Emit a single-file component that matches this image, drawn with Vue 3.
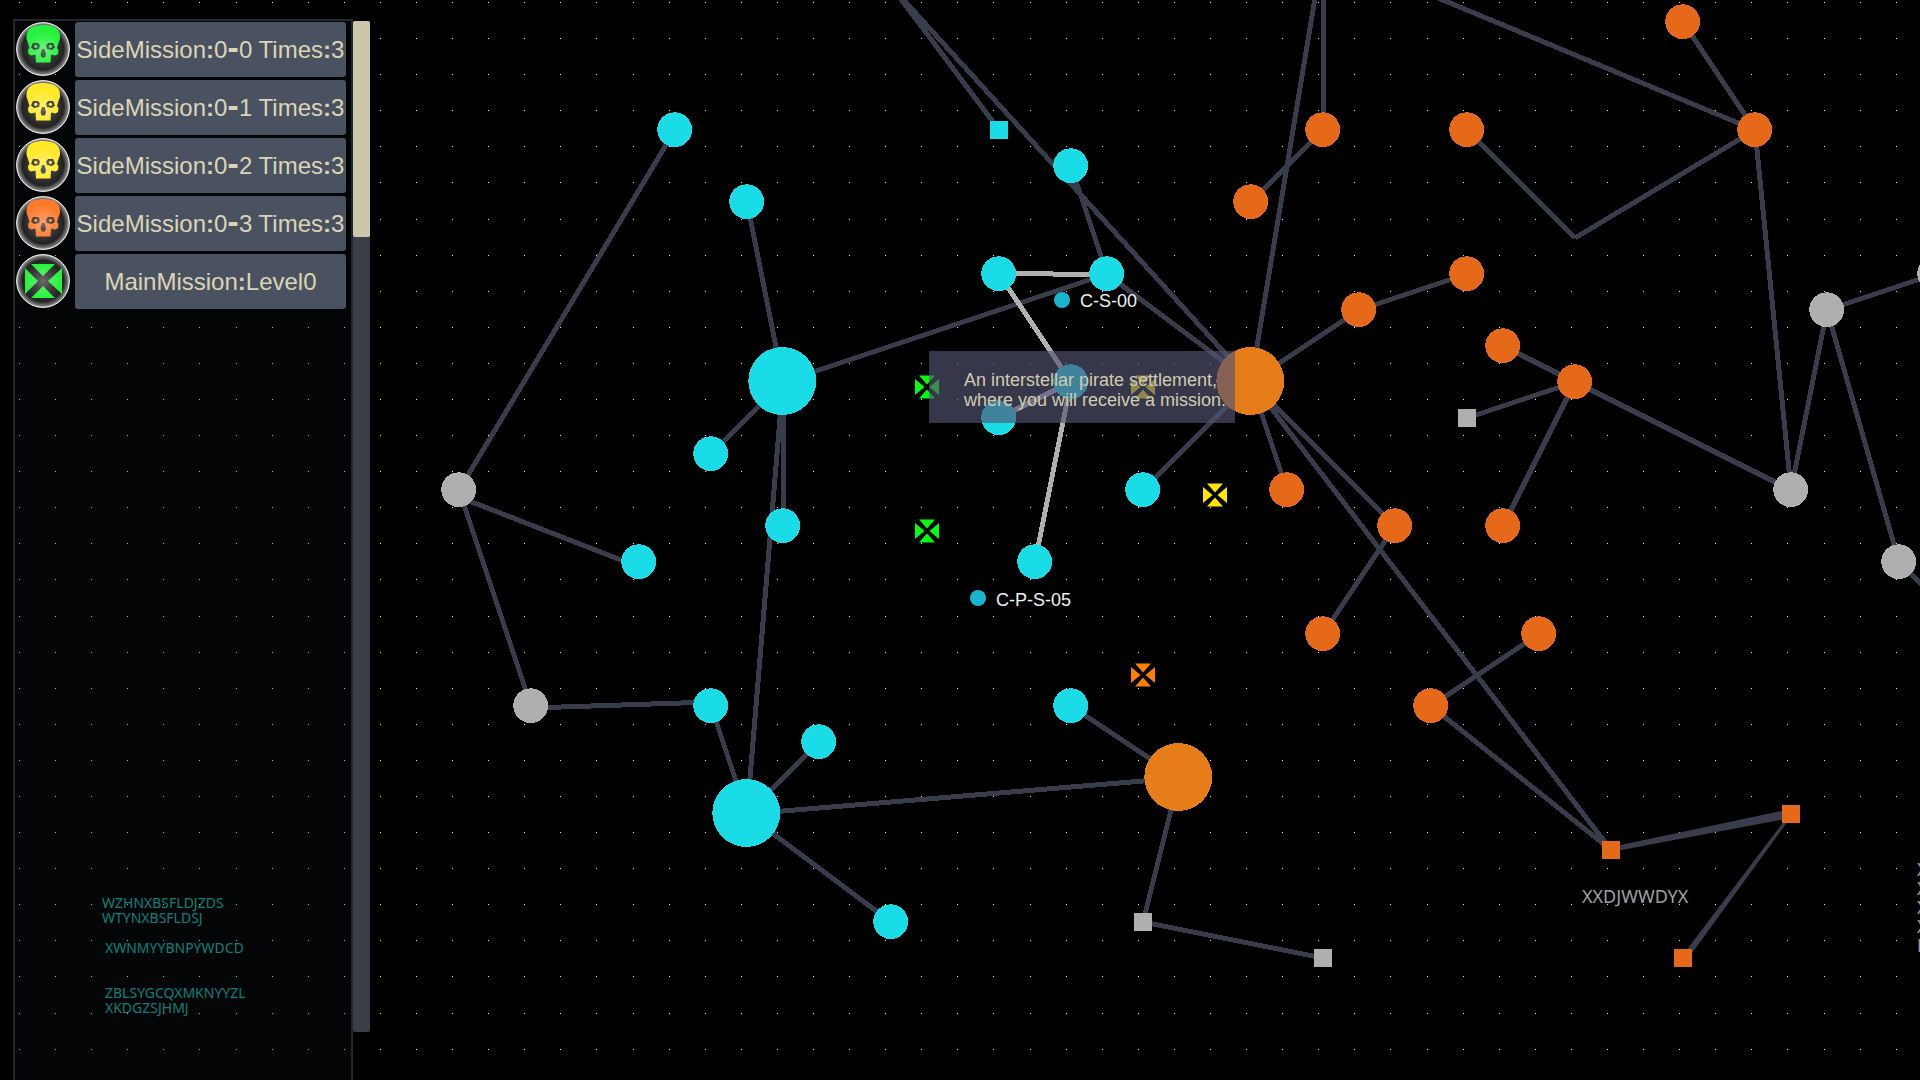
<script setup>
  const CELL = 36;

  // Dots of the star field, a little wider apart than the node grid
  const dots = [];
  for (let row = 0; row < 60; row++)
  {
    for (let col = 0; col < 108; col++)
      dots.push("M" + Math.round(19 + col * 36.09) + " " + Math.round(2 + row * 36.09) + "h1v1h-1z");
  }
  const dotPath = dots.join("");

  const missions = [
    { id: 0, label: "SideMission:0-0 Times:3", icon: "skull", color: "#24f23c" },
    { id: 1, label: "SideMission:0-1 Times:3", icon: "skull", color: "#ffe927" },
    { id: 2, label: "SideMission:0-2 Times:3", icon: "skull", color: "#ffe927" },
    { id: 3, label: "SideMission:0-3 Times:3", icon: "skull", color: "#ff7a2c" },
    { id: 4, label: "MainMission:Level0", icon: "cross", color: "#24f23c" }
  ];

  // [column, row] on the grid
  const circles = [
    { type: "cyan", cells: [[18, 3], [20, 5], [27, 7], [30, 7], [29, 4], [29, 10], [27, 11], [19, 12], [21, 14], [17, 15], [28, 15], [31, 13], [19, 19], [22, 20], [24, 25], [29, 19]] },
    { type: "orange", cells: [[46, 0], [48, 3], [40, 3], [36, 3], [34, 5], [40, 7], [37, 8], [41, 9], [43, 10], [35, 13], [38, 14], [41, 14], [36, 17], [42, 17], [39, 19]] },
    { type: "gray", cells: [[12, 13], [14, 19], [50, 8], [49, 13], [52, 15], [53, 7]] }
  ];

  const hubs = [
    { type: "cyan", cell: [21, 10] },
    { type: "cyan", cell: [20, 22] },
    { type: "amber", cell: [34, 10] },
    { type: "amber", cell: [32, 21] }
  ];

  const squares = [
    { type: "cyan", cell: [27, 3] },
    { type: "gray", cell: [40, 11] },
    { type: "gray", cell: [31, 25] },
    { type: "gray", cell: [36, 26] },
    { type: "orange", cell: [49, 22] },
    { type: "orange", cell: [44, 23] },
    { type: "orange", cell: [46, 26] }
  ];

  // [column, row, column, row]
  const routes = [
    [18, 3, 12, 13], [12, 13, 14, 19], [19, 19, 20, 22],
    [20, 22, 22, 20], [20, 22, 24, 25], [20, 22, 32, 21], [20, 22, 21, 10],
    [21, 10, 21, 14], [21, 10, 19, 12], [21, 10, 20, 5], [21, 10, 30, 7],
    [30, 7, 29, 4], [30, 7, 34, 10], [24, -1, 34, 10], [24, -1, 27, 3],
    [34, 10, 36, -2], [36, 3, 36, -2], [36, 3, 34, 5], [36, -2, 48, 3],
    [34, 10, 31, 13], [34, 10, 35, 13], [34, 10, 38, 14], [34, 10, 44, 23], [34, 10, 37, 8],
    [37, 8, 40, 7], [38, 14, 36, 17], [42, 17, 39, 19], [39, 19, 44, 23],
    [29, 19, 32, 21], [32, 21, 31, 25], [31, 25, 36, 26],
    [40, 3, 43, 6], [43, 6, 48, 3], [48, 3, 46, 0], [48, 3, 49, 13],
    [49, 13, 50, 8], [49, 13, 43, 10], [50, 8, 53, 7], [50, 8, 52, 15], [52, 15, 54, 17],
    [43, 10, 41, 9], [43, 10, 40, 11], [43, 10, 41, 14]
  ];

  const activeRoutes = [[27, 7, 29, 10], [29, 10, 27, 11], [29, 10, 28, 15]];

  const markers = [
    { x: 927, y: 387, color: "#00ff0a" },
    { x: 927, y: 531, color: "#00ff0a" },
    { x: 1143, y: 387, color: "#ffe600" },
    { x: 1215, y: 495, color: "#ffe600" },
    { x: 1143, y: 675, color: "#ff8000" }
  ];

  const edgeLetters = ["X", "X", "X", "X", "N"];

  const px = (col) => 27 + col * CELL;
  const py = (row) => 22 + row * CELL;

  // The font's own colon and dash are too light, so they are drawn bold
  const split = (label) => label.split(/([:-])/);
</script>

<template>
  <main>
    <svg class="map" role="img" aria-label="Star map">
      <path class="dots" :d="dotPath" />
      <g class="routes">
        <line v-for="(r, i) in routes" :key="i" :x1="px(r[0])" :y1="py(r[1])" :x2="px(r[2])" :y2="py(r[3])" />
        <line x1="459" y1="497" x2="639" y2="567" />
        <line x1="531" y1="708" x2="711" y2="702" />
        <polygon points="1611,847 1791,809 1791,818 1611,852" />
        <polygon points="1791,812 1793,814 1687,960 1682,956" />
      </g>
      <g class="routes active">
        <line x1="999" y1="273" x2="1107" y2="275" />
        <line v-for="(r, i) in activeRoutes" :key="i" :x1="px(r[0])" :y1="py(r[1])" :x2="px(r[2])" :y2="py(r[3])" />
      </g>
      <g v-for="group in circles" :key="group.type" :class="group.type">
        <circle v-for="c in group.cells" :key="c.join()" :cx="px(c[0]) - 0.3" :cy="py(c[1]) - 0.3" r="17.4" />
      </g>
      <circle v-for="h in hubs" :key="h.cell.join()" :class="h.type" :cx="px(h.cell[0]) - 0.7" :cy="py(h.cell[1]) - 1" r="34" />
      <rect v-for="s in squares" :key="s.cell.join()" :class="s.type" :x="px(s.cell[0]) - 9" :y="py(s.cell[1]) - 9" width="18" height="18" />
      <g v-for="m in markers" :key="m.x + '-' + m.y" :fill="m.color" :transform="`translate(${m.x} ${m.y})`">
        <path d="M-8 -11.5H8L0 -2.5ZM-8 11.5H8L0 2.5ZM-12 -8V8L-2.5 0ZM12 -8V8L2.5 0Z" />
      </g>
      <circle class="place" cx="1062" cy="300" r="8" />
      <text class="place-name" x="1080" y="307">C-S-00</text>
      <circle class="place" cx="978" cy="598" r="8" />
      <text class="place-name" x="996" y="606">C-P-S-05</text>
      <text class="region" x="1582" y="903">XXDJWWDYX</text>
      <text v-for="(letter, i) in edgeLetters" :key="i" class="region" x="1917" :y="876 + i * 19">{{ letter }}</text>
    </svg>

    <aside>
      <div class="panel">
        <ul>
          <li v-for="mission in missions" :key="mission.id">
            <svg class="badge" viewBox="0 0 54 54" aria-hidden="true">
              <defs>
                <radialGradient :id="'ball' + mission.id">
                  <stop offset="0" stop-color="#6a6a6a" />
                  <stop offset="0.45" stop-color="#3c3c3c" />
                  <stop offset="0.78" stop-color="#222" />
                  <stop offset="0.92" stop-color="#6c6c6c" />
                  <stop offset="1" stop-color="#b0b0b0" />
                </radialGradient>
                <radialGradient :id="'shine' + mission.id" cx="27" cy="27" r="18" gradientUnits="userSpaceOnUse">
                  <stop offset="0" stop-color="#fff" stop-opacity="0.3" />
                  <stop offset="1" stop-color="#fff" stop-opacity="0" />
                </radialGradient>
              </defs>
              <circle cx="27" cy="27" r="26.4" :fill="`url(#ball${mission.id})`" stroke="#f4f4f4" />
              <g v-if="mission.icon === 'skull'">
                <g v-for="fill in [mission.color, `url(#shine${mission.id})`]" :key="fill" :fill="fill">
                  <path fill-rule="evenodd" d="M27 3C20 3 14 5 12 9C10.500 11 10.500 14 10.500 17L12 21L13.500 26L12 28L12.500 32L15 33.500L19.500 32.500L20 40.500H34.500L35 32.500L39.500 33.500L42 32L42.500 28L41 26L42.500 21L44 17C44 14 44 11 42.500 9C40.500 5 34 3 27 3ZM17 21H22L24 23.500L23 27L18 28L15 25.500ZM37 21H32L30 23.500L31 27L36 28L39 25.500ZM26 27H28.500L30 32L29 35.500H25.500L24.500 32Z" />
                  <circle cx="19.700" cy="24.300" r="1.600" />
                  <circle cx="34.500" cy="24.300" r="1.600" />
                </g>
              </g>
              <g v-else>
                <path v-for="fill in [mission.color, `url(#shine${mission.id})`]" :key="fill" :fill="fill" d="M15 10H39L27 22ZM15 44H39L27 32ZM9 14V40L22 27ZM46 14V40L32 27Z" />
              </g>
            </svg>
            <button type="button"><template v-for="(part, i) in split(mission.label)" :key="i"><b v-if="part === ':'">:</b><b v-else-if="part === '-'" class="dash">-</b><template v-else>{{ part }}</template></template></button>
          </li>
        </ul>
        <div class="codes">
          <p>WZHNXBSFLDJZDS<br>WTYNXBSFLDSJ</p>
          <p class="inset">XWNMYYBNPYWDCD</p>
          <p class="inset last">ZBLSYGCQXMKNYYZL<br>XKDGZSJHMJ</p>
        </div>
      </div>
      <div class="scrollbar">
        <div class="thumb"></div>
      </div>
    </aside>

    <div class="tooltip" role="tooltip">An interstellar pirate settlement,<br>where you will receive a mission.</div>
  </main>
</template>

<style>
  body
  {
    margin: 0;
    background-color: black;
  }
</style>

<style scoped>
  main
  {
    position: relative;
    min-height: 100vh;
    box-sizing: border-box;
    padding: 19px 13px 0;
    display: flex;
    overflow: hidden;
    background-color: black;
    font-family: "Liberation Sans", Arial, sans-serif;
  }

  .map
  {
    position: absolute;
    top: 0;
    left: 0;
    width: 100%;
    height: 100%;
  }

  .map circle, .map rect, .map line, .dots
  {
    shape-rendering: crispEdges;
  }

  .dots
  {
    fill: #f0f0f0;
  }

  .routes
  {
    stroke: #383c4b;
    stroke-width: 5;
    fill: #383c4b;
  }

  .routes polygon
  {
    stroke: none;
  }

  .active
  {
    stroke: #b0b0b0;
  }

  .cyan
  {
    fill: #19dce6;
  }

  .orange
  {
    fill: #e66919;
  }

  .amber
  {
    fill: #e67d19;
  }

  .gray
  {
    fill: #afafaf;
  }

  .map .place
  {
    fill: #19b4cd;
    shape-rendering: auto;
  }

  .place-name
  {
    fill: #f0f0f0;
    font-size: 18px;
  }

  .region
  {
    fill: #a0a0a0;
    font-family: "Noto Sans", sans-serif;
    font-size: 18px;
  }

  aside
  {
    position: relative;
    display: flex;
    align-items: stretch;
  }

  .panel
  {
    display: flex;
    flex-direction: column;
    justify-content: space-between;
    border: 2px solid #23272f;
    border-bottom: 0;
    background-color: rgba(12, 15, 20, 0.3);
  }

  ul
  {
    list-style: none;
    margin: 0;
    padding: 1px 5px 0 1px;
    display: flex;
    flex-direction: column;
    gap: 3px;
  }

  li
  {
    display: flex;
    gap: 5px;
  }

  .badge
  {
    width: 54px;
    height: 54px;
  }

  button
  {
    width: 271px;
    height: 55px;
    border: 0;
    border-radius: 3px;
    padding: 0;
    background-color: #4a5262;
    color: #dcd5b4;
    font-family: inherit;
    font-size: 24px;
    white-space: nowrap;
    cursor: pointer;
  }

  .dash
  {
    font-family: "DejaVu Sans", sans-serif;
    font-size: 28px;
    line-height: 24px;
  }

  .codes
  {
    padding: 0 0 65px 87px;
    color: #0e827a;
    font-family: "Noto Sans", sans-serif;
    font-size: 14px;
    line-height: 15px;
  }

  .codes p
  {
    margin: 0;
  }

  .codes .inset
  {
    margin: 15px 0 0 3px;
  }

  .codes .last
  {
    margin-top: 30px;
  }

  .scrollbar
  {
    width: 17px;
    margin: 2px 0 48px;
    border-radius: 2px;
    background-color: #3a3e46;
  }

  .thumb
  {
    height: 216px;
    border-radius: 2px;
    background-color: #cdc6aa;
  }

  .tooltip
  {
    position: absolute;
    top: 351px;
    left: 929px;
    padding: 19px 9px 13px 35px;
    background-color: rgba(84, 84, 117, 0.65);
    color: #d2ccae;
    font-size: 18px;
    line-height: 20px;
    white-space: nowrap;
  }
</style>
